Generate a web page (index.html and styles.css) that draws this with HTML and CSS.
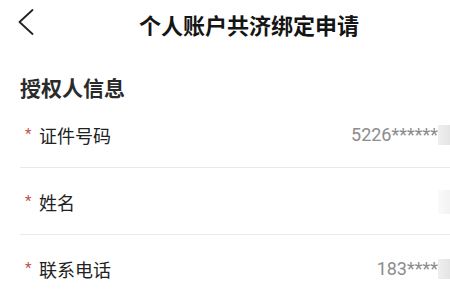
FILE: index.html
```html
<!DOCTYPE html>
<html lang="zh-CN">
<head>
<meta charset="utf-8">
<link rel="stylesheet" href="styles.css">
</head>
<body>
<div class="page">
  <header class="header">
    <svg class="back" width="16" height="26" viewBox="0 0 16 26">
      <polyline points="14.5,1 1.5,13 14.5,25" fill="none" stroke="#222" stroke-width="1.8" stroke-linecap="round" stroke-linejoin="round"/>
    </svg>
    <h1 class="title">个人账户共济绑定申请</h1>
  </header>
  <h2 class="section">授权人信息</h2>
  <div class="list">
    <div class="row">
      <span class="star">*</span>
      <span class="label">证件号码</span>
      <span class="value">5226******</span>
      <span class="mask"></span>
    </div>
    <div class="row">
      <span class="star">*</span>
      <span class="label">姓名</span>
      <span class="value"></span>
      <span class="mask faint"></span>
    </div>
    <div class="row">
      <span class="star">*</span>
      <span class="label">联系电话</span>
      <span class="value">183****</span>
      <span class="mask"></span>
    </div>
  </div>
</div>
</body>
</html>
```

FILE: styles.css
```css
html, body {
  margin: 0;
  padding: 0;
  background: #ffffff;
}
body {
  font-family: "Noto Sans CJK SC", "Noto Sans", sans-serif;
  color: #222;
  overflow: hidden;
}
.page {
  width: 450px;
  height: 300px;
  overflow: hidden;
}
.header {
  height: 48px;
  display: flex;
  align-items: center;
  padding-left: 18px;
}
.back {
  display: block;
  margin-top: -4px;
}
.title {
  margin: 0 0 0 105px;
  font-size: 22px;
  font-weight: 700;
  line-height: 28px;
  color: #151515;
  white-space: nowrap;
}
.section {
  margin: 26px 0 1px 20px;
  font-size: 21px;
  font-weight: 700;
  line-height: 26px;
  color: #2a2a2a;
}
.list {
  margin-left: 20px;
}
.row {
  height: 67px;
  box-sizing: border-box;
  padding-top: 2px;
  border-bottom: 1px solid #e9e9e9;
  display: flex;
  align-items: center;
}
.star {
  width: 19px;
  padding-left: 5px;
  box-sizing: border-box;
  color: #c0504d;
  font-family: "Roboto", sans-serif;
  font-size: 15px;
  line-height: 1;
  align-self: center;
  margin-top: -2px;
}
.label {
  font-size: 18px;
  line-height: 24px;
  color: #222;
}
.value {
  margin-left: auto;
  font-family: "Roboto", "Noto Sans CJK SC", sans-serif;
  font-size: 18px;
  line-height: 24px;
  color: #8c8c8c;
}
.mask {
  width: 12px;
  height: 20px;
  background: linear-gradient(90deg, #efefef, #e4e4e4);
}
.mask.faint {
  background: linear-gradient(90deg, #fafafa, #f3f3f3);
  height: 24px;
}
```
